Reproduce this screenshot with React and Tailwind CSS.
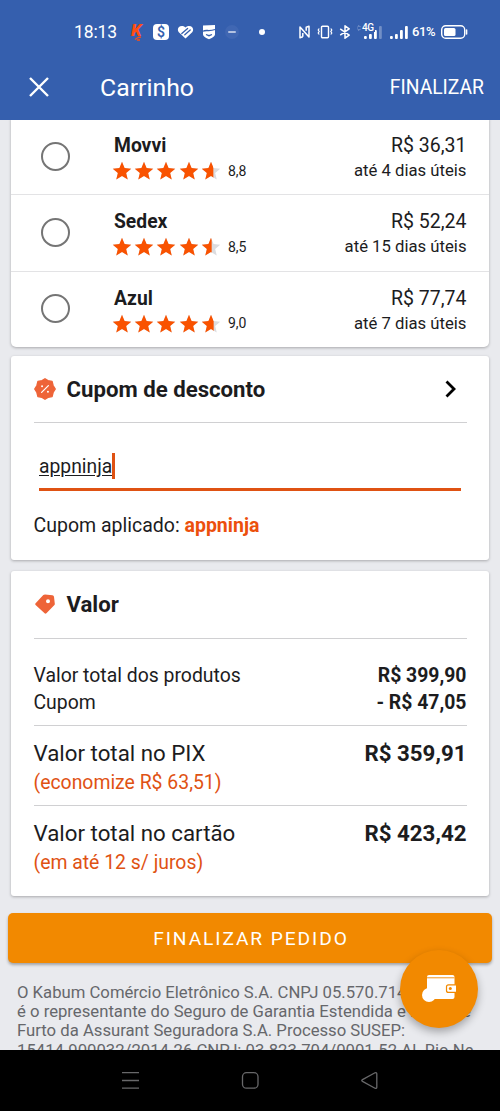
const shipping = [
  { name: "Movvi", rating: "8,8", fill: 14.8, price: "R$ 36,31", days: "até 4 dias úteis" },
  { name: "Sedex", rating: "8,5", fill: 12.8, price: "R$ 52,24", days: "até 15 dias úteis" },
  { name: "Azul", rating: "9,0", fill: 15.2, price: "R$ 77,74", days: "até 7 dias úteis" },
];

const STAR = "M12 1l3.100 7.500 8 .7-6.100 5.200 1.900 7.900L12 18.100 5.100 22.300 7 14.400.9 9.200l8-.7z";

function Star({ id, fill = 24 }) {
  return (
    <svg viewBox="0 0 24 24" className="w-5 h-5 shrink-0">
      <clipPath id={id}>
        <rect width={fill} height="24" />
      </clipPath>
      <path d={STAR} fill="#dcdcdf" />
      <path d={STAR} fill="#f95200" clipPath={`url(#${id})`} />
    </svg>
  );
}

function Signal({ bars, dim }) {
  return (
    <svg viewBox="0 0 20 16" className="w-5 h-4">
      {bars.map((h, i) => (
        <rect key={i} x={1 + i * 5} y={15 - h} width="2.8" height={h} rx="1" fill="#fff" opacity={dim && i === 3 ? 0.3 : 1} />
      ))}
    </svg>
  );
}

function StatusBar() {
  return (
    <div className="h-16 flex items-center pl-[74px] pr-8 text-white">
      <span className="w-[43px] text-[17.500px] leading-5 tracking-[-0.1px]">18:13</span>
      <div className="flex items-center ml-[13px]">
        <div className="relative w-[14px] h-5 mr-[9px]">
          <span className="absolute left-px -top-px text-[17px] leading-[18px] font-black italic text-[#ff4d12]">K</span>
          <svg viewBox="0 0 14 6" className="absolute left-0 top-[13px] w-[14px] h-[6px]" fill="none" stroke="#ff4d12" strokeWidth="1.300">
            <path d="M5 4.500l3-2 3-.5M7 5h3" />
          </svg>
        </div>
        <span className="w-4 h-4 rounded-[4px] bg-white text-[#355fae] text-[14px] leading-[16px] font-semibold text-center">$</span>
        <svg viewBox="0 0 17 16" className="w-[17px] h-4 ml-2">
          <path d="M8.500 14.500L1.800 8.300C-1.200 4.400 3.500-.4 8.500 3.400c5-3.800 9.700 1 6.700 4.900z" fill="#fff" />
          <path d="M4.800 9.600l5.800-5.200M7.800 10.800l5.400-4.800" stroke="#355fae" strokeWidth="1.300" strokeLinecap="round" />
        </svg>
        <svg viewBox="0 0 14 16" className="w-[14px] h-4 ml-[8px]">
          <path d="M1 1.600L13 1v9.200c0 2.200-3 3.600-6 5-3-1.400-6-2.800-6-5z" fill="#fff" />
          <path d="M1 7.200c3-1.800 6 .6 12-1.700M4 10.500l3 1.200 3-1.200" fill="none" stroke="#355fae" strokeWidth="1.300" />
        </svg>
        <span className="w-[14px] h-[14px] rounded-full bg-[#4067b3] ml-[9px] flex items-center justify-center">
          <span className="w-[8px] h-[2px] rounded-full bg-[#b4c3e2]" />
        </span>
        <span className="w-[6px] h-[6px] rounded-full bg-white ml-[20px]" />
      </div>
      <div className="flex items-center ml-auto">
        <svg viewBox="0 0 11 14" className="w-[11px] h-[14px]" fill="none" stroke="#fff" strokeWidth="1.500" strokeLinejoin="round">
          <path d="M3.800 11.800L1 12.800V2l7.500 8.200M2.800 3.900L10 12V1.200L7.200 2.200v3.600M3.800 11.800V8" />
        </svg>
        <svg viewBox="0 0 16 14" className="w-4 h-[14px] ml-[7px]" fill="none" stroke="#fff" strokeWidth="1.400">
          <rect x="4.500" y="1.200" width="7" height="11.600" rx="1" />
          <path d="M2.200 3.500l-1 1.500 1 1.500-1 1.500 1 1.500M13.800 3.500l1 1.500-1 1.500 1 1.500-1 1.500" strokeWidth="1.200" />
        </svg>
        <svg viewBox="0 0 12 14" className="w-3 h-[14px] ml-[6px]" fill="none" stroke="#fff" strokeWidth="1.500" strokeLinejoin="round">
          <path d="M1.200 3.800l9 6.300L6 13.200V.8l4.200 3.100-9 6.300" />
        </svg>
        <div className="relative w-[26px] h-4 ml-[6px]">
          <svg viewBox="0 0 5 8" className="absolute left-0 top-0 w-[4px] h-2" fill="none" stroke="#8fa6d2" strokeWidth="1.200">
            <path d="M.5 3l2-2 2 2M.5 5l2 2 2-2" />
          </svg>
          <div className="absolute left-[6px] top-0">
            <Signal bars={[3, 5, 9, 13]} dim />
          </div>
          <span className="absolute left-[4px] top-[-1px] px-px bg-[#355fae] text-[10px] leading-[9px] tracking-[-0.4px] font-medium">4G</span>
        </div>
        <div className="ml-[6px]">
          <Signal bars={[3, 5, 9, 13]} />
        </div>
        <span className="w-[25px] ml-[3px] text-[13px] leading-4 tracking-[-0.400px] font-medium whitespace-nowrap">61%</span>
        <svg viewBox="0 0 28 16" className="w-7 h-4 ml-[3px]">
          <rect x="1.700" y="1.700" width="23" height="12.600" rx="4" fill="none" stroke="#fff" strokeWidth="1.400" />
          <rect x="4" y="4" width="11.500" height="8" rx="1.500" fill="#fff" />
          <path d="M26.600 6v4" stroke="#fff" strokeWidth="1.500" strokeLinecap="round" />
        </svg>
      </div>
    </div>
  );
}

function Card({ className, children }) {
  return (
    <section className={`mx-[11px] bg-white shadow-[0_1px_3px_rgba(0,0,0,0.28)] ${className}`}>
      {children}
    </section>
  );
}

function ShippingRow({ name, rating, fill, price, days }) {
  return (
    <div className="h-[76.400px] flex pt-[14px] pl-[30px] pr-[22.500px] border-t border-[#e3e3e5]">
      <span className="w-[29px] h-[29px] mt-[8.500px] rounded-full border-[2.500px] border-[#757575]" />
      <div className="ml-[44px]">
        <div className="text-[19.300px] leading-[26px] font-bold">{name}</div>
        <div className="flex items-center h-[24px] -ml-[2px] gap-[2.200px]">
          {[1, 2, 3, 4].map((n) => (
            <Star key={n} id={`${name}-${n}`} />
          ))}
          <Star id={`${name}-5`} fill={fill} />
          <span className="ml-[5px] -mt-px text-[14px] leading-5">{rating}</span>
        </div>
      </div>
      <div className="ml-auto text-right">
        <div className="text-[19.500px] leading-[26px]">{price}</div>
        <div className="text-[16.700px] leading-[23px]">{days}</div>
      </div>
    </div>
  );
}

export default function App() {
  return (
    <div className="relative w-[500px] h-[1111px] overflow-hidden bg-[#e9eaee] font-['Roboto',sans-serif] text-[#1c1c1e]">
      <header className="h-[120px] bg-[#355fae] text-white">
        <StatusBar />
        <div className="h-[47px] flex items-center pl-[29px] pr-4">
          <svg viewBox="0 0 20 20" className="w-5 h-5 -mt-[2px]" stroke="#fff" strokeWidth="2.400">
            <path d="M1 1l18 18M19 1L1 19" />
          </svg>
          <h1 className="ml-[51px] text-[24.800px] leading-8">Carrinho</h1>
          <span className="ml-auto text-[19.300px] leading-6">FINALIZAR</span>
        </div>
      </header>

      <main className="h-[930px] overflow-hidden">
        {/* the first row is scrolled slightly under the header */}
        <Card className="-mt-[2px] h-[229px] rounded-b-[5px]">
          {shipping.map((s) => (
            <ShippingRow key={s.name} {...s} />
          ))}
        </Card>

        <Card className="mt-[8.500px] h-[204px] rounded-[3px] px-[22.500px]">
          <div className="h-[67.500px] flex items-center border-b-[1.500px] border-[#d0d0d2]">
            <svg viewBox="0 0 24 24" className="w-[22px] h-[22px]">
              <path
                d="M12 .8l3.200 2 4.500.9 1.100 4.500L23.200 12l-2.400 3.800-1.100 4.500-4.500.9L12 23.200l-3.200-2-4.500-.9-1.100-4.500L.8 12l2.400-3.800 1.100-4.500 4.500-.9z"
                fill="#ee6438"
                stroke="#ee6438"
                strokeWidth="1.500"
                strokeLinejoin="round"
              />
              <path d="M8.300 15.700l7.400-7.400" stroke="#fff" strokeWidth="1.400" strokeLinecap="round" />
              <circle cx="8.800" cy="9" r="1.100" fill="#fff" />
              <circle cx="15.200" cy="15" r="1.100" fill="#fff" />
            </svg>
            <h2 className="ml-[11px] text-[22.200px] leading-7 font-bold">Cupom de desconto</h2>
            <svg viewBox="0 0 11 18" className="w-[11px] h-[18px] ml-auto mr-[11px]" fill="none" stroke="#000" strokeWidth="2.800">
              <path d="M1.500 1.500L9 9l-7.500 7.500" />
            </svg>
          </div>
          <div className="mx-[5.500px] mt-[30px] h-[37.500px] flex items-start border-b-[3px] border-[#df5213]">
            <span className="mt-[2px] text-[19.300px] leading-6 underline underline-offset-2">appninja</span>
            <span className="w-[3px] h-[26px] bg-[#df5213]" />
          </div>
          <p className="mt-[21.500px] text-[19.500px] leading-7">
            Cupom aplicado: <b className="text-[#ec4f0c]">appninja</b>
          </p>
        </Card>

        <Card className="mt-[11.500px] h-[325px] rounded-[3px] px-[22.500px]">
          <div className="h-[67.500px] flex items-center border-b-[1.500px] border-[#d0d0d2]">
            <svg viewBox="0 0 20 20" className="w-[20px] h-[20px] ml-px -mt-px">
              <path
                fillRule="evenodd"
                d="M.6 9.200L8.300 1Q9 .4 10 .4l7.400.8q1.400.2 1.600 1.600l.8 6.900q.1.900-.6 1.600l-7.800 7.900q-.9.900-1.800 0L.6 10.900q-.8-.8 0-1.700zM13 5.200a2 2 0 100 4 2 2 0 000-4z"
                fill="#ee6438"
              />
            </svg>
            <h2 className="ml-[12px] text-[22.200px] leading-7 font-bold">Valor</h2>
          </div>
          <div className="h-[87.500px] pt-[24.500px] border-b-[1.500px] border-[#d0d0d2] text-[19.400px] leading-[26.500px]">
            <div className="flex justify-between">
              <span>Valor total dos produtos</span>
              <b>R$ 399,90</b>
            </div>
            <div className="flex justify-between">
              <span>Cupom</span>
              <b>- R$ 47,05</b>
            </div>
          </div>
          <div className="h-[80px] pt-[12px] border-b-[1.500px] border-[#d0d0d2]">
            <div className="flex justify-between text-[22.300px] leading-[30px]">
              <span>Valor total no PIX</span>
              <b>R$ 359,91</b>
            </div>
            <div className="pt-[2px] text-[19.400px] leading-[26px] text-[#df5213]">(economize R$ 63,51)</div>
          </div>
          <div className="pt-[12px]">
            <div className="flex justify-between text-[22.300px] leading-[30px]">
              <span>Valor total no cartão</span>
              <b>R$ 423,42</b>
            </div>
            <div className="pt-[2px] text-[19.400px] leading-[26px] text-[#df5213]">(em até 12 s/ juros)</div>
          </div>
        </Card>

        <button className="block mt-[17px] ml-2 w-[484px] h-[50px] rounded-[5px] bg-[#f28900] text-white text-[19.200px] tracking-[1.900px] pl-[2px] pt-[2px] shadow-[0_2px_3px_rgba(0,0,0,0.3)]">
          FINALIZAR PEDIDO
        </button>

        <p className="mt-[19.500px] ml-[17px] text-[16.700px] leading-[19.400px] text-[#66676b] whitespace-nowrap">
          O Kabum Comércio Eletrônico S.A. CNPJ 05.570.714/0001
          <br />é o representante do Seguro de Garantia Estendida e Roubo e
          <br />
          Furto da Assurant Seguradora S.A. Processo SUSEP:
          <br />
          15414.900032/2014-26 CNPJ: 03.823.704/0001-52 Al. Rio Ne
        </p>
      </main>

      {/* Floating wallet button */}
      <button className="absolute left-[400px] top-[950px] w-[78px] h-[78px] rounded-full bg-[#f28900] flex items-center justify-center shadow-[0_4px_8px_rgba(0,0,0,0.3)]">
        <svg viewBox="0 0 34 28" className="w-[34px] h-7">
          <path d="M5 2q0-2 2-2h23.500q2 0 2 2v20q0 2-2 2H5z" fill="#fff" />
          <circle cx="7" cy="20" r="7" fill="#fff" />
          <path d="M5 2.800h27.500" stroke="#f28900" strokeWidth=".9" />
          <path d="M34 9.800h-7.500q-2 0-2 2v3.600q0 2 2 2H34" fill="#fff" stroke="#f28900" strokeWidth="1.200" />
          <circle cx="28.300" cy="13.600" r="1.500" fill="#f28900" />
        </svg>
      </button>

      <nav className="h-[61px] bg-black">
        <svg viewBox="0 0 500 61" className="w-[500px] h-[61px]" fill="none" stroke="#68686a" strokeWidth="1.300">
          <path d="M122 22.700h17M122 30.500h17M122 38.200h17" />
          <rect x="242.500" y="22.700" width="15.500" height="15.500" rx="4" />
          <path d="M362.500 29.600l12.500-6.800q1.800-.7 1.800 1v13.400q0 1.700-1.800 1l-12.500-6.800q-1.500-.9 0-1.800z" />
        </svg>
      </nav>
    </div>
  );
}
